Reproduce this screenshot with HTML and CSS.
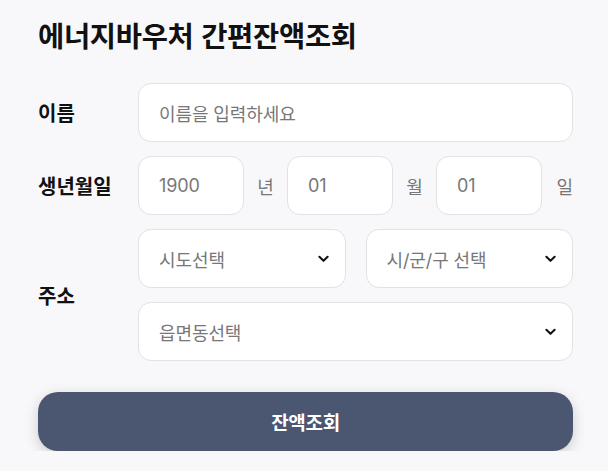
FILE: index.html
```html
<!DOCTYPE html>
<html lang="ko">
<head>
<meta charset="utf-8">
<link rel="stylesheet" href="styles.css">
</head>
<body>
<main class="page">
  <h1 class="title">에너지바우처 간편잔액조회</h1>
  <div class="form">
    <div class="label">이름</div>
    <div class="field"><div class="box full"><span class="ph">이름을 입력하세요</span></div></div>

    <div class="label">생년월일</div>
    <div class="field birth">
      <div class="box small"><span class="ph">1900</span></div><span class="unit">년</span>
      <div class="box small"><span class="ph">01</span></div><span class="unit">월</span>
      <div class="box small"><span class="ph">01</span></div><span class="unit last">일</span>
    </div>

    <div class="label addr">주소</div>
    <div class="field addr-fields">
      <div class="addr-row">
        <div class="box select"><span class="ph">시도선택</span><svg class="chev" viewBox="0 0 12 8"><path d="M1.5 1.5 L6 6 L10.5 1.5" fill="none" stroke="#111" stroke-width="2.2" stroke-linecap="round" stroke-linejoin="round"/></svg></div>
        <div class="box select"><span class="ph">시/군/구 선택</span><svg class="chev" viewBox="0 0 12 8"><path d="M1.5 1.5 L6 6 L10.5 1.5" fill="none" stroke="#111" stroke-width="2.2" stroke-linecap="round" stroke-linejoin="round"/></svg></div>
      </div>
      <div class="box select"><span class="ph">읍면동선택</span><svg class="chev" viewBox="0 0 12 8"><path d="M1.5 1.5 L6 6 L10.5 1.5" fill="none" stroke="#111" stroke-width="2.2" stroke-linecap="round" stroke-linejoin="round"/></svg></div>
    </div>
  </div>
  <button class="btn">잔액조회</button>
</main>
</body>
</html>
```
FILE: styles.css
```css
* { box-sizing: border-box; }
html, body { margin: 0; padding: 0; background: #f8f8fa; }
body { font-family: Inter, "Noto Sans CJK KR", sans-serif; color: #111; }
.page { padding: 14px 35px 0 38px; }
.title {
  margin: 0;
  font-family: "Noto Sans CJK KR", sans-serif;
  font-size: 28.5px;
  font-weight: 700;
  line-height: 42px;
  letter-spacing: -0.3px;
  color: #111;
}
.form {
  margin-top: 27px;
  display: grid;
  grid-template-columns: 100px 1fr;
  row-gap: 14px;
  align-items: center;
}
.label {
  font-family: "Noto Sans CJK KR", sans-serif;
  font-size: 20px;
  font-weight: 700;
  color: #111;
  letter-spacing: 0;
}
.box {
  height: 59px;
  background: #fff;
  border: 1px solid #e2e2e6;
  border-radius: 13px;
  display: flex;
  align-items: center;
  padding: 0 20px;
}
.ph {
  font-size: 18px;
  color: #777;
  font-family: Inter, "Noto Sans CJK KR", sans-serif;
  letter-spacing: -0.1px;
}
.birth { display: flex; align-items: center; }
.small { width: 106px; flex: none; }
.unit {
  width: 43px;
  flex: none;
  text-align: center;
  font-size: 18px;
  color: #777;
  font-family: "Noto Sans CJK KR", sans-serif;
}
.unit.last { flex: 1; width: auto; text-align: right; }
.addr-fields { display: flex; flex-direction: column; gap: 14px; }
.addr-row { display: grid; grid-template-columns: 1fr 1fr; gap: 20px; }
.select { justify-content: space-between; padding-right: 16px; }
.chev { width: 11px; height: 8px; }
.btn {
  margin-top: 31px;
  width: 100%;
  height: 59px;
  border: none;
  border-radius: 20px;
  background: #4b5671;
  color: #fff;
  font-family: "Noto Sans CJK KR", sans-serif;
  font-size: 19px;
  font-weight: 700;
  letter-spacing: -0.3px;
  box-shadow: 0 4px 14px rgba(0,0,0,0.18);
}
```
